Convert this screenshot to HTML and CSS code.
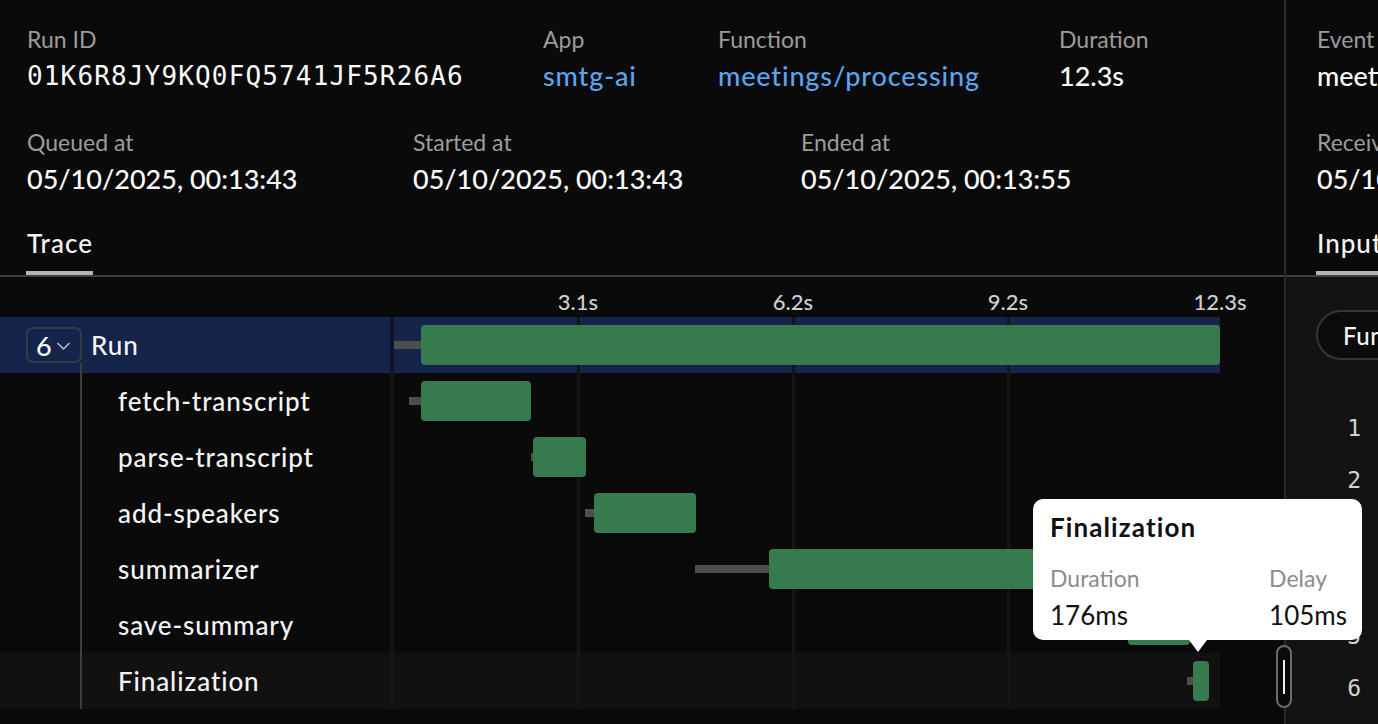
FILE: index.html
```html
<!DOCTYPE html>
<html lang="en">
<head>
<meta charset="utf-8">
<title>Run trace</title>
<link rel="stylesheet" href="styles.css">
</head>
<body>
<div class="app">
  <main class="main">
    <section class="meta">
      <div class="meta-row1">
        <div class="field"><div class="label">Run ID</div><div class="value mono">01K6R8JY9KQ0FQ5741JF5R26A6</div></div>
        <div class="field"><div class="label">App</div><div class="value link">smtg-ai</div></div>
        <div class="field"><div class="label">Function</div><div class="value link">meetings/processing</div></div>
        <div class="field"><div class="label">Duration</div><div class="value">12.3s</div></div>
      </div>
      <div class="meta-row2">
        <div class="field"><div class="label">Queued at</div><div class="value">05/10/2025, 00:13:43</div></div>
        <div class="field"><div class="label">Started at</div><div class="value">05/10/2025, 00:13:43</div></div>
        <div class="field"><div class="label">Ended at</div><div class="value">05/10/2025, 00:13:55</div></div>
      </div>
    </section>
    <nav class="tabs"><div class="tab active">Trace</div></nav>
    <section class="trace">
      <div class="ticks">
        <span class="tick" style="left:184px">3.1s</span>
        <span class="tick" style="left:399px">6.2s</span>
        <span class="tick" style="left:614px">9.2s</span>
        <span class="tick" style="left:826px">12.3s</span>
      </div>
      <div class="rows">
        <div class="gridline" style="left:577px"></div>
        <div class="gridline" style="left:792px"></div>
        <div class="gridline" style="left:1007px"></div>
        <div class="row run-row">
          <div class="name">
            <span class="badge">6
              <svg class="chev" width="15" height="14" viewBox="0 0 15 14"><path d="M2 4.5 L7.5 10 L13 4.5" fill="none" stroke="#b5b5b5" stroke-width="1.7" stroke-linecap="round" stroke-linejoin="round"/></svg>
            </span>
            <span class="run-label">Run</span>
          </div>
          <div class="track">
            <div class="delay" style="left:0px;width:27px"></div>
            <div class="bar" style="left:27px;width:799px"></div>
          </div>
        </div>
        <div class="children">
          <div class="row">
            <div class="name child">fetch-transcript</div>
            <div class="track">
              <div class="delay" style="left:15px;width:12px"></div>
              <div class="bar" style="left:27px;width:110px"></div>
            </div>
          </div>
          <div class="row">
            <div class="name child">parse-transcript</div>
            <div class="track">
              <div class="delay" style="left:137px;width:3px"></div>
              <div class="bar" style="left:139px;width:53px"></div>
            </div>
          </div>
          <div class="row">
            <div class="name child">add-speakers</div>
            <div class="track">
              <div class="delay" style="left:191px;width:10px"></div>
              <div class="bar" style="left:200px;width:102px"></div>
            </div>
          </div>
          <div class="row">
            <div class="name child">summarizer</div>
            <div class="track">
              <div class="delay" style="left:301px;width:75px"></div>
              <div class="bar" style="left:375px;width:351px"></div>
            </div>
          </div>
          <div class="row">
            <div class="name child">save-summary</div>
            <div class="track">
              <div class="delay" style="left:726px;width:9px"></div>
              <div class="bar" style="left:734px;width:62px"></div>
            </div>
          </div>
          <div class="row active-row">
            <div class="name child">Finalization</div>
            <div class="track">
              <div class="delay" style="left:793px;width:7px"></div>
              <div class="bar" style="left:799px;width:16px"></div>
            </div>
          </div>
        </div>
      </div>
    </section>
  </main>
  <div class="divider"></div>
  <aside class="side">
    <section class="meta side-meta">
      <div class="field"><div class="label">Event</div><div class="value">meetings/processing.requested</div></div>
      <div class="field"><div class="label">Received at</div><div class="value">05/10/2025, 00:13:43</div></div>
    </section>
    <nav class="tabs side-tabs"><div class="tab active">Input</div><div class="tab">Output</div></nav>
    <section class="side-body">
      <div class="pill">Function payload</div>
      <div class="code">
        <div class="ln">1</div>
        <div class="ln">2</div>
        <div class="ln">3</div>
        <div class="ln">4</div>
        <div class="ln">5</div>
        <div class="ln">6</div>
      </div>
    </section>
  </aside>

  <div class="tooltip">
    <div class="tt-title">Finalization</div>
    <div class="tt-cols">
      <div class="tt-col"><div class="tt-label">Duration</div><div class="tt-value">176ms</div></div>
      <div class="tt-col"><div class="tt-label">Delay</div><div class="tt-value">105ms</div></div>
    </div>
  </div>
  <div class="handle"><span class="handle-line"></span></div>
</div>
</body>
</html>
```
FILE: styles.css
```css
* { box-sizing: border-box; margin: 0; padding: 0; }
html, body { width: 1378px; height: 724px; overflow: hidden; background: #0a0a0a; }
body { font-family: Lato, "Noto Sans", sans-serif; color: #f4f4f4; }

.app { position: relative; display: flex; height: 724px; }
.main { width: 1284px; flex: none; display: flex; flex-direction: column; }
.divider { width: 2px; flex: none; background: #2b2b2b; }
.side { flex: 1; min-width: 0; overflow: hidden; display: flex; flex-direction: column; }

/* metadata */
.meta { padding: 25px 0 0 27px; display: flex; flex-direction: column; gap: 34px; }
.meta-row1 { display: grid; grid-template-columns: 516px 175px 341px auto; }
.meta-row2 { display: grid; grid-template-columns: 386px 388px auto; }
.field { display: flex; flex-direction: column; gap: 5px; }
.label { font-size: 23px; line-height: 28px; color: #9c9c9c; white-space: nowrap; }
.value { font-size: 27px; line-height: 36px; font-weight: 500; color: #fbfbfb; white-space: nowrap; }
.mono { font-family: "DejaVu Sans Mono", monospace; font-size: 26px; font-weight: 400; letter-spacing: 1.15px; }
.link { color: #5ba4ee; letter-spacing: 0.85px; }

/* tabs */
.tabs { margin-top: 30px; padding-left: 26px; display: flex; gap: 32px; border-bottom: 2px solid #404040; }
.tab { font-size: 26px; line-height: 32px; font-weight: 500; letter-spacing: 1px; padding: 0 0 12px 1px; border-bottom: 4px solid transparent; color: #f4f4f4; white-space: nowrap; }
.tab.active { border-bottom-color: #b3b3b3; }

/* trace */
.trace { display: flex; flex-direction: column; }
.ticks { position: relative; height: 40px; margin-left: 394px; width: 826px; }
.tick { position: absolute; top: 12px; transform: translateX(-50%); font-size: 22px; line-height: 26px; font-weight: 500; color: #cfcfcf; white-space: nowrap; }

.rows { position: relative; width: 1220px; }
.gridline { position: absolute; top: 0; bottom: 0; width: 3px; background: #151515; z-index: 1; }
.row { display: flex; height: 56px; }
.run-row { background: #15244a; }
.active-row { background: #111111; }
.name { width: 390px; flex: none; display: flex; align-items: center; font-size: 26px; font-weight: 500; letter-spacing: 0.9px; color: #f4f4f4; white-space: nowrap; }
.name.child { padding-left: 118px; }
.track { position: relative; flex: 1; border-left: 4px solid #151515; }
.run-row .track { border-left-color: #0e1426; }

.badge { margin-left: 26px; width: 56px; height: 36px; border: 2px solid #353a44; border-radius: 7px; display: flex; align-items: center; padding-left: 8px; gap: 4px; font-size: 27px; letter-spacing: 0; color: #fafafa; }
.chev { flex: none; margin-top: 1px; }
.run-label { margin-left: 9px; }

.children { position: relative; }
.children::before { content: ""; position: absolute; left: 80px; top: -10px; bottom: 0; width: 2px; background: #3e3e3e; }

.delay { position: absolute; top: 24px; height: 8px; background: #4d4d4d; z-index: 2; }
.bar { position: absolute; top: 8px; height: 40px; background: #367a4e; border-radius: 4px; z-index: 3; }

/* side panel */
.side-meta { padding-left: 31px; }
.side-tabs { padding-left: 30px; }
.side-body { flex: 1; background: #131313; padding-top: 33px; }
.pill { margin-left: 30px; height: 50px; width: 260px; border: 2px solid #363636; border-radius: 25px; background: #0b0b0b; display: flex; align-items: center; padding-left: 25px; font-size: 24px; font-weight: 500; letter-spacing: 0.6px; color: #f4f4f4; white-space: nowrap; }
.code { margin-top: 42px; }
.ln { width: 75px; text-align: right; font-family: "DejaVu Sans Mono", monospace; font-size: 23px; line-height: 52px; color: #d2d2d2; }

/* tooltip */
.tooltip { position: absolute; left: 1033px; top: 499px; width: 329px; height: 141px; background: #ffffff; border-radius: 10px; padding: 13px 15px 0 17px; z-index: 10; color: #111; }
.tooltip::after { content: ""; position: absolute; left: 156px; top: 100%; border-left: 9px solid transparent; border-right: 9px solid transparent; border-top: 12px solid #ffffff; }
.tt-title { font-size: 26px; line-height: 30px; font-weight: 700; letter-spacing: 1.1px; color: #111; }
.tt-cols { display: flex; justify-content: space-between; margin-top: 22px; }
.tt-col { display: flex; flex-direction: column; gap: 7px; }
.tt-label { font-size: 23px; line-height: 28px; color: #8b8b8b; }
.tt-value { font-size: 26px; line-height: 32px; color: #111; }

.handle { position: absolute; left: 1276px; top: 645px; width: 16px; height: 63px; border: 2px solid #6c6c6c; border-radius: 8px; background: #0a0a0a; display: flex; justify-content: center; align-items: center; z-index: 5; }
.handle-line { width: 2px; height: 34px; background: #f0f0f0; }
```
